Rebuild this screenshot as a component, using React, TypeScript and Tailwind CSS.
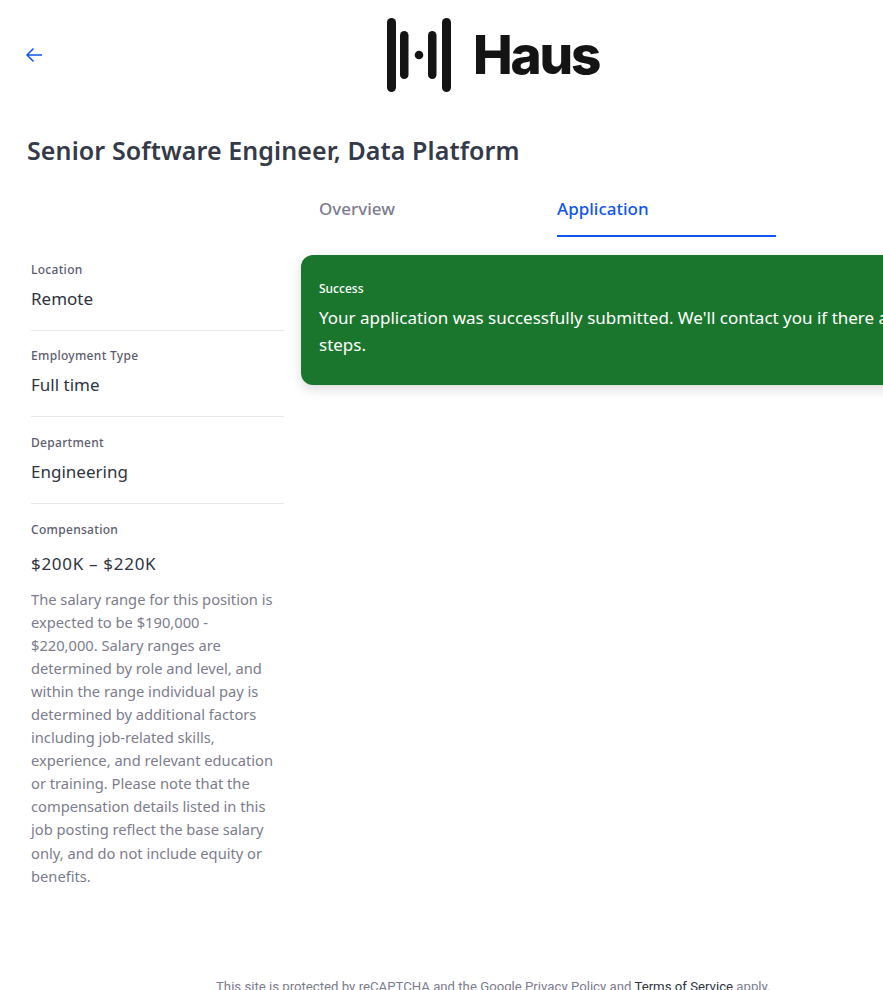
import React from 'react';

const Field: React.FC<{ label: string; value: string }> = ({ label, value }) => (
    <div className="pt-[17.5px] pb-[18px] border-b border-[#e8e8ea]">
        <div className="text-[12px] leading-[16px] font-medium tracking-[0.3px] text-[#5c5c6e]">{label}</div>
        <div className="mt-[8px] text-[17px] leading-[26px] text-[#2e3440]">{value}</div>
    </div>
);

const Logo: React.FC = () => (
    <svg width="64" height="74" viewBox="0 0 64 74" fill="#141414">
        <rect x="0" y="0" width="9" height="74" rx="4.5" />
        <rect x="13" y="13" width="8.5" height="48" rx="4.25" />
        <circle cx="32" cy="37" r="4.3" />
        <rect x="41" y="13" width="8.5" height="48" rx="4.25" />
        <rect x="55" y="0" width="9" height="74" rx="4.5" />
    </svg>
);

export default function App() {
    return (
        <div className="w-[883px] h-[990px] overflow-hidden bg-white font-['Noto_Sans',sans-serif] flex flex-col">
            <header className="h-[110px] pt-[18px] flex items-start relative shrink-0">
                <button className="absolute left-[24px] top-[45px] text-[#0f56f0]">
                    <svg width="20" height="20" viewBox="0 0 20 20" fill="none" stroke="currentColor" strokeWidth="1.5">
                        <path d="M18 10H3M9.5 3.5L3 10l6.5 6.5" />
                    </svg>
                </button>
                <div className="ml-[387px] flex items-center">
                    <Logo />
                    <span className="ml-[22px] font-['Inter',sans-serif] font-extrabold text-[53px] leading-[74px] tracking-[-2.2px] text-[#141414]">Haus</span>
                </div>
            </header>

            <h1 className="ml-[27px] mt-[23px] text-[25px] leading-[34px] font-semibold tracking-[0.1px] text-[#343a48] whitespace-nowrap">
                Senior Software Engineer, Data Platform
            </h1>

            <div className="ml-[319px] mt-[23px] flex gap-[19px] shrink-0">
                <div className="w-[219px] h-[47px] pt-[6px] text-[17px] leading-[26px] font-medium text-[#7c7c8e]">Overview</div>
                <div className="w-[219px] h-[47px] pt-[6px] text-[17px] leading-[26px] font-medium text-[#0f56f0] border-b-2 border-[#0f56f0]">Application</div>
            </div>

            <div className="flex mt-[18px] h-[724px] shrink-0">
                <aside className="ml-[31px] w-[253px] shrink-0 -mt-[11px]">
                    <Field label="Location" value="Remote" />
                    <Field label="Employment Type" value="Full time" />
                    <Field label="Department" value="Engineering" />
                    <div className="pt-[18px]">
                        <div className="text-[12px] leading-[16px] font-medium tracking-[0.3px] text-[#5c5c6e]">Compensation</div>
                        <div className="mt-[13px] text-[17px] leading-[26px] tracking-[0.7px] text-[#2e3440]">$200K – $220K</div>
                    </div>
                    <p className="mt-[11px] text-[14.7px] leading-[23.1px] text-[#7c7c8e] whitespace-nowrap">
                        The salary range for this position is<br />
                        expected to be $190,000 -<br />
                        $220,000. Salary ranges are<br />
                        determined by role and level, and<br />
                        within the range individual pay is<br />
                        determined by additional factors<br />
                        including job-related skills,<br />
                        experience, and relevant education<br />
                        or training. Please note that the<br />
                        compensation details listed in this<br />
                        job posting reflect the base salary<br />
                        only, and do not include equity or<br />
                        benefits.
                    </p>
                </aside>
                <main className="ml-[17px] w-[680px] shrink-0">
                    <div className="h-[130px] rounded-[12px] bg-[#1b762d] text-white px-[18px] pt-[25px] shadow-[0_4px_12px_rgba(0,0,0,0.15)]">
                        <div className="text-[12px] leading-[18px] font-medium">Success</div>
                        <p className="mt-[6px] text-[17px] leading-[27px]">
                            Your application was successfully submitted. We'll contact you if there are next steps.
                        </p>
                    </div>
                </main>
            </div>

            <footer className="ml-[216px] whitespace-nowrap text-[13.2px] leading-[16px] text-[#7c7c8e] font-['Roboto',sans-serif] shrink-0">
                This site is protected by reCAPTCHA and the Google Privacy Policy and <span className="text-[#2e3440]">Terms of Service</span> apply.
            </footer>
        </div>
    );
}
